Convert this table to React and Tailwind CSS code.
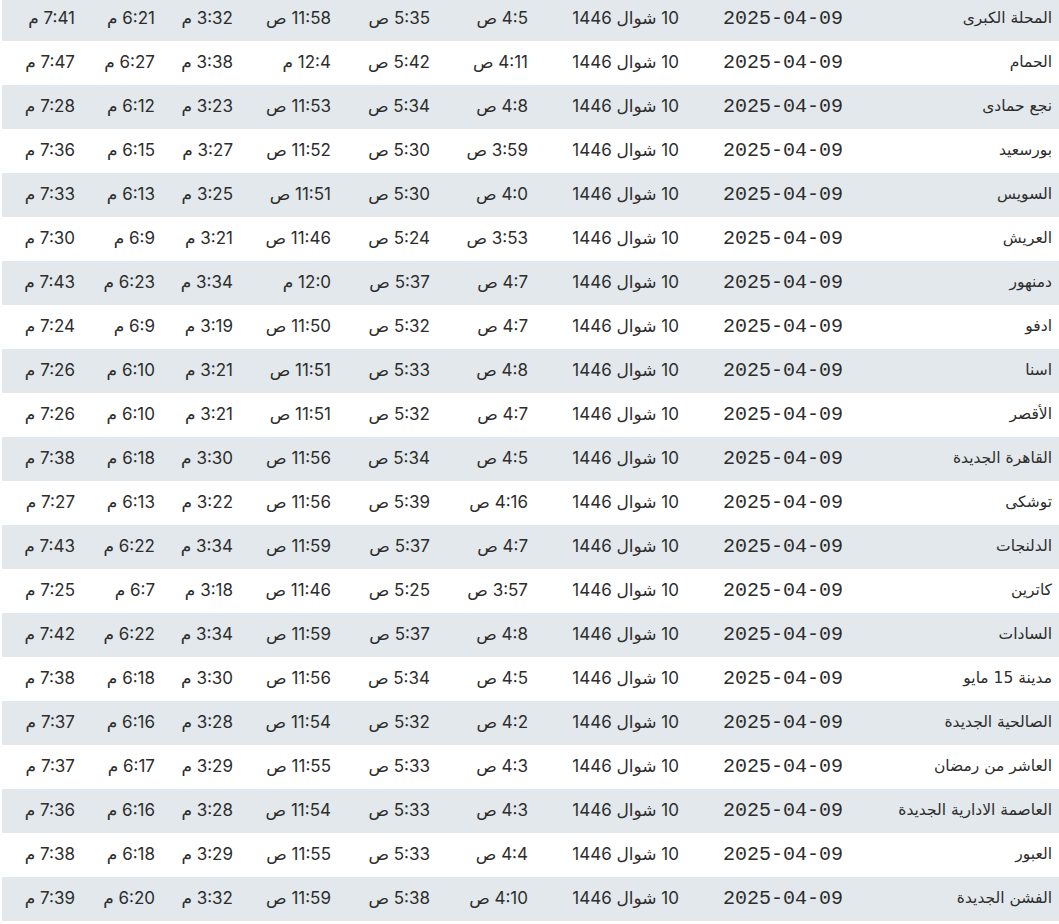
const rows = [
	["المحلة الكبرى", "4:5 ص", "5:35 ص", "11:58 ص", "3:32 م", "6:21 م", "7:41 م"],
	["الحمام", "4:11 ص", "5:42 ص", "12:4 م", "3:38 م", "6:27 م", "7:47 م"],
	["نجع حمادى", "4:8 ص", "5:34 ص", "11:53 ص", "3:23 م", "6:12 م", "7:28 م"],
	["بورسعيد", "3:59 ص", "5:30 ص", "11:52 ص", "3:27 م", "6:15 م", "7:36 م"],
	["السويس", "4:0 ص", "5:30 ص", "11:51 ص", "3:25 م", "6:13 م", "7:33 م"],
	["العريش", "3:53 ص", "5:24 ص", "11:46 ص", "3:21 م", "6:9 م", "7:30 م"],
	["دمنهور", "4:7 ص", "5:37 ص", "12:0 م", "3:34 م", "6:23 م", "7:43 م"],
	["ادفو", "4:7 ص", "5:32 ص", "11:50 ص", "3:19 م", "6:9 م", "7:24 م"],
	["اسنا", "4:8 ص", "5:33 ص", "11:51 ص", "3:21 م", "6:10 م", "7:26 م"],
	["الأقصر", "4:7 ص", "5:32 ص", "11:51 ص", "3:21 م", "6:10 م", "7:26 م"],
	["القاهرة الجديدة", "4:5 ص", "5:34 ص", "11:56 ص", "3:30 م", "6:18 م", "7:38 م"],
	["توشكى", "4:16 ص", "5:39 ص", "11:56 ص", "3:22 م", "6:13 م", "7:27 م"],
	["الدلنجات", "4:7 ص", "5:37 ص", "11:59 ص", "3:34 م", "6:22 م", "7:43 م"],
	["كاترين", "3:57 ص", "5:25 ص", "11:46 ص", "3:18 م", "6:7 م", "7:25 م"],
	["السادات", "4:8 ص", "5:37 ص", "11:59 ص", "3:34 م", "6:22 م", "7:42 م"],
	["مدينة 15 مايو", "4:5 ص", "5:34 ص", "11:56 ص", "3:30 م", "6:18 م", "7:38 م"],
	["الصالحية الجديدة", "4:2 ص", "5:32 ص", "11:54 ص", "3:28 م", "6:16 م", "7:37 م"],
	["العاشر من رمضان", "4:3 ص", "5:33 ص", "11:55 ص", "3:29 م", "6:17 م", "7:37 م"],
	["العاصمة الادارية الجديدة", "4:3 ص", "5:33 ص", "11:54 ص", "3:28 م", "6:16 م", "7:36 م"],
	["العبور", "4:4 ص", "5:33 ص", "11:55 ص", "3:29 م", "6:18 م", "7:38 م"],
	["الفشن الجديدة", "4:10 ص", "5:38 ص", "11:59 ص", "3:32 م", "6:20 م", "7:39 م"],
];

const PrayerRow = ({ row, striped }) => {
	const [city, ...times] = row;
	return (
		<div
			className={`grid h-[44px] grid-cols-[209px_164px_151px_98px_99px_98px_78px_80px_1fr] items-center pr-[7px] ${
				striped ? "bg-[#e2e8eb]" : "bg-white"
			}`}>
			<div className="text-[15.5px] font-['DejaVu_Sans',sans-serif]">{city}</div>
			<div className="text-[20px] font-['Liberation_Mono',monospace]">2025-04-09</div>
			<div className="text-[17px]">10 شوال 1446</div>
			{times.map((t, i) => (
				<div key={i} className="text-[17px]">
					{t}
				</div>
			))}
		</div>
	);
};

export default function App() {
	return (
		<div className="h-[924px] overflow-hidden bg-white">
			<div
				dir="rtl"
				className="-mt-[3px] ml-[2px] text-[#2d2d2d] font-['Inter','DejaVu_Sans',sans-serif]">
				{rows.map((row, i) => (
					<PrayerRow key={i} row={row} striped={i % 2 === 0} />
				))}
			</div>
		</div>
	);
}
